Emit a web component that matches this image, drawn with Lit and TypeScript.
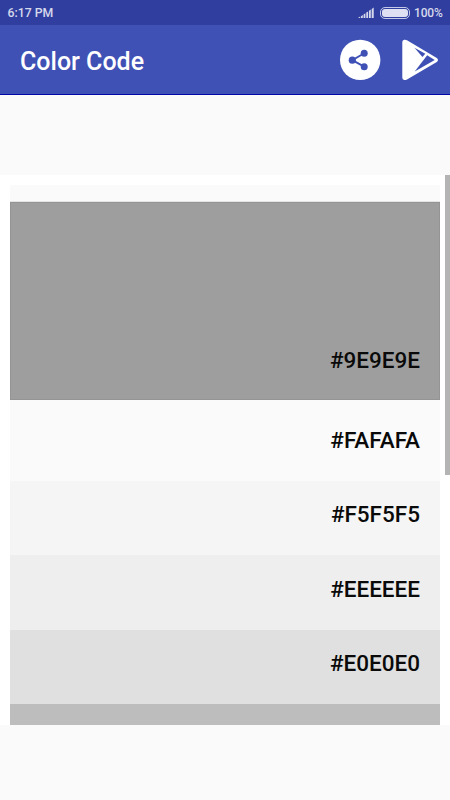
import { LitElement, html, css } from "lit";
import { customElement } from "lit/decorators.js";

const shades = [
  { code: "#9E9E9E", height: 198 },
  { code: "#FAFAFA", height: 81 },
  { code: "#F5F5F5", height: 74 },
  { code: "#EEEEEE", height: 74.5 },
  { code: "#E0E0E0", height: 74.5 },
];

@customElement("app-root")
export class AppRoot extends LitElement {
  static styles = css`
    :host {
      display: flex;
      flex-direction: column;
      height: 800px;
      overflow: hidden;
      background: #fafafa;
      font-family: Roboto, sans-serif;
    }
    * {
      box-sizing: border-box;
    }
    .status {
      flex: none;
      height: 25px;
      background: #303f9f;
      color: #d6d9ec;
      display: flex;
      align-items: center;
      padding: 1px 8px 0 7.5px;
      font-size: 12px;
      font-weight: 500;
      line-height: 25px;
    }
    .time {
      flex: 1;
      font-size: 12.3px;
    }
    .level {
      width: 28px;
      letter-spacing: -0.15px;
    }
    .signal {
      margin-right: 6px;
    }
    .battery {
      margin-right: 4px;
    }
    .status svg,
    .bar svg {
      display: block;
      flex: none;
    }
    .bar {
      flex: none;
      height: 70px;
      background: #3f51b5;
      border-bottom: 1px solid #0005a5;
      display: flex;
      align-items: center;
      padding: 1px 10px 0 20px;
    }
    .title {
      flex: 1;
      margin: 0;
      padding-top: 3px;
      color: #fff;
      font-size: 25px;
      font-weight: 500;
      line-height: 30px;
    }
    .share {
      margin-right: 21px;
    }
    .panel {
      flex: none;
      margin-top: 80px;
      height: 550px;
      background: #fff;
      display: flex;
      justify-content: space-between;
      padding-left: 10px;
    }
    .list {
      width: 430px;
      height: 540px;
      margin-top: 10px;
      background: #fafafa;
      overflow: hidden;
      display: flex;
      flex-direction: column;
    }
    .previous {
      flex: none;
      height: 17px;
      border-bottom: 1px solid #e4e4e4;
    }
    .row {
      flex: none;
      display: flex;
      align-items: flex-end;
      justify-content: flex-end;
      padding: 0 20px 28px 0;
      color: #0a0a0a;
      font-size: 22.5px;
      font-weight: 500;
      line-height: 26px;
    }
    .row.main {
      padding-bottom: 26px;
      border: 1px solid #949494;
      padding-right: 19px;
    }
    .next {
      flex: 1;
      background: #bdbdbd;
    }
    .thumb {
      width: 5px;
      height: 300px;
      background: #b4b4b4;
    }
  `;

  render() {
    return html`
      <div class="status">
        <span class="time">6:17 PM</span>
        <svg class="signal" width="16" height="12" viewBox="0 0 16 12" fill="#d6d9ec">
          <path
            d="M0 11 2.200 9.600V11zM3 9.200 4.800 8v3H3zM5.600 7.400 7.400 6.200V11H5.600zM8.300 5.600 10.100 4.400V11H8.300zM11 3.800 12.800 2.600V11H11zM13.700 1.900 15.700.600V11h-2z"
          />
        </svg>
        <svg class="battery" width="30" height="12" viewBox="0 0 30 12">
          <rect x=".5" y=".5" width="29" height="11" rx="4.500" fill="none" stroke="#c4c9e8" />
          <rect x="2" y="2" width="26" height="8" rx="3" fill="#dfe0f1" />
        </svg>
        <span class="level">100%</span>
      </div>
      <div class="bar">
        <h1 class="title">Color Code</h1>
        <svg class="share" width="42" height="42" viewBox="0 0 42 42">
          <circle cx="21.200" cy="20.900" r="20.200" fill="#fff" />
          <path d="M25.200 14.300 13.300 21.200l11.900 6.500" fill="none" stroke="#3f51b5" stroke-width="1.900" />
          <g fill="#3f51b5">
            <circle cx="25.200" cy="14.300" r="3.500" />
            <circle cx="13.300" cy="21.200" r="3.600" />
            <circle cx="25.200" cy="27.700" r="3.500" />
          </g>
        </svg>
        <svg width="38" height="42" viewBox="0 0 38 42">
          <path
            d="M2.300.8Q3.500.5 5 1.300L34.800 18.900q2.400 2 0 4L5 40.400Q3.500 41.200 2.300 41 .3 40.700.3 38.800V3Q.3 1.100 2.300.8z"
            fill="#fff"
          />
          <path d="M12.500 8.700 23.300 14.800 20.400 18z" fill="#3f51b5" />
          <path d="M25.200 16.300 32.700 20.900 12.700 32.600z" fill="#3f51b5" />
        </svg>
      </div>
      <div class="panel">
        <div class="list">
          <div class="previous"></div>
          ${shades.map(
            (s, i) => html`
              <div class="row ${i === 0 ? "main" : ""}" style="height:${s.height}px;background:${s.code}">
                ${s.code}
              </div>
            `
          )}
          <div class="next"></div>
        </div>
        <div class="thumb"></div>
      </div>
    `;
  }
}
